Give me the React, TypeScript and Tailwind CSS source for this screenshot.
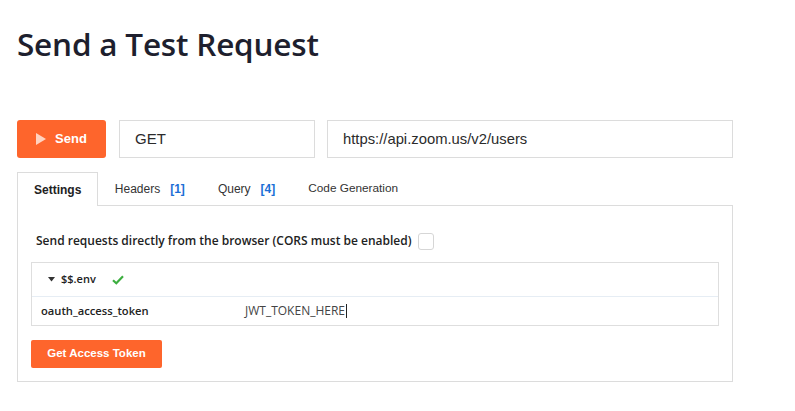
import React from "react";

export default function App() {
  const sys = { fontFamily: '"Liberation Sans", Arial, sans-serif' };
  return (
    <div className="min-h-[411px] w-[795px] bg-white pl-[17px] pt-[22px]" style={{ fontFamily: '"Open Sans", sans-serif' }}>
      <h1 className="text-[31.5px] leading-[44px] font-semibold text-[#1e1f2e] tracking-[-0.2px]">Send a Test Request</h1>
      <div className="mt-[54px] flex h-[38px] w-[716px] items-stretch" style={sys}>
        <button className="flex w-[89px] items-center justify-center gap-[9px] rounded-[3px] bg-[#fe652c] text-[13px] font-bold text-white">
          <svg width="10" height="12" viewBox="0 0 10 12"><path d="M0 0 L10 6 L0 12 Z" fill="#ffd2c0" /></svg>
          Send
        </button>
        <div className="ml-[13px] flex w-[196px] items-center border border-[#dcdcdc] pl-[15px] text-[15px] text-[#2b2b2b]">GET</div>
        <div className="ml-[12px] flex flex-1 items-center border border-[#dcdcdc] pl-[15px] text-[14.8px] text-[#2b2b2b]">https://api.zoom.us/v2/users</div>
      </div>
      <div className="mt-[14px] w-[716px]">
        <div className="relative z-10 flex h-[34px] items-stretch text-[12px]" style={sys}>
          <div className="flex items-center border border-b-0 border-[#dcdcdc] bg-white px-[16px] font-bold text-[#222]">Settings</div>
          <div className="flex items-center px-[16.5px] text-[#333]">Headers<span className="ml-[10px] font-bold text-[#1b6fd6]">[1]</span></div>
          <div className="flex items-center px-[16.5px] text-[#333]">Query<span className="ml-[10px] font-bold text-[#1b6fd6]">[4]</span></div>
          <div className="flex items-center px-[16.5px] text-[11.8px] text-[#333]">Code Generation</div>
        </div>
        <div className="-mt-px border border-[#dcdcdc] px-[13px] pt-[25px] pb-[13px]">
          <div className="flex h-[20px] items-center pl-[5px] text-[12px] font-semibold text-[#222]">
            Send requests directly from the browser (CORS must be enabled)
            <span className="ml-[6px] inline-block h-[17px] w-[16px] rounded-[3px] border border-[#d6d6d6] bg-white" />
          </div>
          <div className="mt-[11px] border border-[#dedede]">
            <div className="flex h-[34px] items-center border-b border-[#e6edf4] pl-[16px] text-[11px] font-semibold text-[#222]">
              <svg width="7" height="5" viewBox="0 0 7 5" className="mr-[6px]"><path d="M0 0 L7 0 L3.5 4.5 Z" fill="#333" /></svg>
              $$.env
              <svg width="12" height="10" viewBox="0 0 12 10" className="ml-[16px]"><path d="M1 5.2 L4.3 8.3 L11 1.3" fill="none" stroke="#3cae3f" strokeWidth="2.2" /></svg>
            </div>
            <div className="flex h-[28px] items-center pl-[9px] text-[12px]">
              <span className="w-[204px] text-[11.2px] font-semibold text-[#222]">oauth_access_token</span>
              <span className="text-[#444]">JWT_TOKEN_HERE</span>
              <span className="ml-px inline-block h-[14px] w-px bg-[#222]" />
            </div>
          </div>
          <button className="mt-[14px] flex h-[28px] w-[131px] items-center justify-center rounded-[2px] bg-[#fe652c] text-[11.5px] font-bold text-white" style={sys}>
            Get Access Token
          </button>
        </div>
      </div>
    </div>
  );
}
